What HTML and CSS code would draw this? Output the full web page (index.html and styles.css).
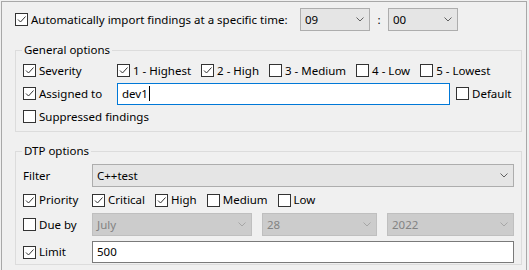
FILE: index.html
```html
<!DOCTYPE html>
<html>
<head>
<meta charset="utf-8">
<link rel="stylesheet" href="styles.css">
</head>
<body>
<div class="panel">
  <div class="top-row">
    <label class="cb top-cb"><span class="box"><svg viewBox="0 0 11 11"><polyline points="2,5.5 4.5,8 9.5,2.5"/></svg></span><span>Automatically import findings at a specific time:</span></label>
    <div class="combo w-time"><span class="val">09</span><svg class="chev" viewBox="0 0 8 5"><polyline points="0.5,0.5 4,4 7.5,0.5"/></svg></div>
    <span class="colon">:</span>
    <div class="combo w-time"><span class="val">00</span><svg class="chev" viewBox="0 0 8 5"><polyline points="0.5,0.5 4,4 7.5,0.5"/></svg></div>
  </div>

  <fieldset class="group g-general">
    <legend>General options</legend>
    <div class="row">
      <label class="cb lbl lbl-wide"><span class="box"><svg viewBox="0 0 11 11"><polyline points="2,5.5 4.5,8 9.5,2.5"/></svg></span><span>Severity</span></label>
      <div class="opts">
        <label class="cb"><span class="box"><svg viewBox="0 0 11 11"><polyline points="2,5.5 4.5,8 9.5,2.5"/></svg></span><span>1 - Highest</span></label>
        <label class="cb"><span class="box"><svg viewBox="0 0 11 11"><polyline points="2,5.5 4.5,8 9.5,2.5"/></svg></span><span>2 - High</span></label>
        <label class="cb"><span class="box"></span><span>3 - Medium</span></label>
        <label class="cb"><span class="box"></span><span>4 - Low</span></label>
        <label class="cb"><span class="box"></span><span>5 - Lowest</span></label>
      </div>
    </div>
    <div class="row">
      <label class="cb lbl lbl-wide"><span class="box"><svg viewBox="0 0 11 11"><polyline points="2,5.5 4.5,8 9.5,2.5"/></svg></span><span>Assigned to</span></label>
      <div class="input focused w-assigned"><span>dev1</span><span class="caret"></span></div>
      <label class="cb default-cb"><span class="box"></span><span>Default</span></label>
    </div>
    <div class="row">
      <label class="cb"><span class="box"></span><span>Suppressed findings</span></label>
    </div>
  </fieldset>

  <fieldset class="group g-dtp">
    <legend>DTP options</legend>
    <div class="row row-filter">
      <span class="lbl lbl-narrow plain">Filter</span>
      <div class="combo w-full"><span class="val">C++test</span><svg class="chev" viewBox="0 0 8 5"><polyline points="0.5,0.5 4,4 7.5,0.5"/></svg></div>
    </div>
    <div class="row row-priority">
      <label class="cb lbl lbl-narrow"><span class="box"><svg viewBox="0 0 11 11"><polyline points="2,5.5 4.5,8 9.5,2.5"/></svg></span><span>Priority</span></label>
      <div class="opts">
        <label class="cb"><span class="box"><svg viewBox="0 0 11 11"><polyline points="2,5.5 4.5,8 9.5,2.5"/></svg></span><span>Critical</span></label>
        <label class="cb"><span class="box"><svg viewBox="0 0 11 11"><polyline points="2,5.5 4.5,8 9.5,2.5"/></svg></span><span>High</span></label>
        <label class="cb"><span class="box"></span><span>Medium</span></label>
        <label class="cb"><span class="box"></span><span>Low</span></label>
      </div>
    </div>
    <div class="row">
      <label class="cb lbl lbl-narrow"><span class="box"></span><span>Due by</span></label>
      <div class="date-combos">
        <div class="combo disabled w-month"><span class="val">July</span><svg class="chev" viewBox="0 0 8 5"><polyline points="0.5,0.5 4,4 7.5,0.5"/></svg></div>
        <div class="combo disabled w-day"><span class="val">28</span><svg class="chev" viewBox="0 0 8 5"><polyline points="0.5,0.5 4,4 7.5,0.5"/></svg></div>
        <div class="combo disabled w-year"><span class="val">2022</span><svg class="chev" viewBox="0 0 8 5"><polyline points="0.5,0.5 4,4 7.5,0.5"/></svg></div>
      </div>
    </div>
    <div class="row row-limit">
      <label class="cb lbl lbl-narrow"><span class="box"><svg viewBox="0 0 11 11"><polyline points="2,5.5 4.5,8 9.5,2.5"/></svg></span><span>Limit</span></label>
      <div class="input w-full"><span>500</span></div>
    </div>
  </fieldset>
</div>
</body>
</html>
```

FILE: styles.css
```css
* { box-sizing: border-box; }

html, body {
  margin: 0;
  padding: 0;
  background: #f0f0f0;
}

body {
  font-family: "Noto Sans", "Open Sans", sans-serif;
  font-size: 11.5px;
  color: #000;
  overflow: hidden;
}

.panel {
  margin: 1px 0 0 1px;
  width: 526px;
  height: 280px;
  border: 1px solid #a8a8a8;
  border-bottom: none;
  background: #f0f0f0;
}

.top-row {
  display: flex;
  align-items: center;
  height: 23px;
  margin-top: 6px;
  padding-left: 13px;
}

.cb {
  display: flex;
  align-items: center;
  white-space: nowrap;
  line-height: 16px;
}

.top-cb { width: 285px; }

.box {
  flex: 0 0 13px;
  width: 13px;
  height: 13px;
  border: 1px solid #333333;
  background: #fff;
  margin-right: 3px;
  display: block;
}

.box svg {
  display: block;
  width: 11px;
  height: 11px;
}

.box polyline {
  fill: none;
  stroke: #333333;
  stroke-width: 1;
}

.combo {
  display: flex;
  align-items: center;
  justify-content: space-between;
  height: 23px;
  background: #e5e5e5;
  border: 1px solid #adadad;
  padding: 0 5px 0 4px;
}

.combo .val { line-height: 16px; }

.chev {
  width: 8px;
  height: 5px;
  display: block;
}

.chev polyline {
  fill: none;
  stroke: #606060;
  stroke-width: 1;
}

.combo.disabled {
  background: #cccccc;
  border-color: #bfbfbf;
  color: #838383;
}

.combo.disabled .chev polyline { stroke: #a6a6a6; }

.w-time { width: 70px; }

.colon {
  width: 18px;
  text-align: center;
}

.group {
  border: 1px solid #dcdcdc;
  min-width: 0;
  margin: 11px 4px 0 13px;
  padding: 0 0 3px 7px;
}

.group legend {
  line-height: 16px;
  padding: 0 2px;
  margin-left: -1px;
}

.g-general { padding-top: 1px; }

.row {
  display: flex;
  align-items: center;
  height: 23px;
}

.lbl-wide { width: 94px; flex: 0 0 94px; }
.lbl-narrow { width: 69px; flex: 0 0 69px; }

.opts {
  display: flex;
  align-items: center;
  gap: 10px;
}

.input {
  display: flex;
  align-items: center;
  height: 22px;
  background: #fff;
  border: 1px solid #7a7a7a;
  padding-left: 4px;
  line-height: 16px;
}

.input.focused { border-color: #0078d7; }

.caret {
  display: block;
  width: 1px;
  height: 15px;
  background: #000;
  margin-left: 1px;
}

.w-assigned { width: 333px; }

.default-cb { margin-left: 6px; }

.g-dtp { padding-bottom: 1px; }

.row-filter { margin-top: 5px; }
.row-priority { height: 26px; }
.row-limit { margin-top: 5px; height: 22px; }

.w-full { width: 422px; }

.date-combos {
  display: flex;
  gap: 10px;
}

.w-month { width: 160px; }
.w-day { width: 115px; }
.w-year { width: 127px; }
```
